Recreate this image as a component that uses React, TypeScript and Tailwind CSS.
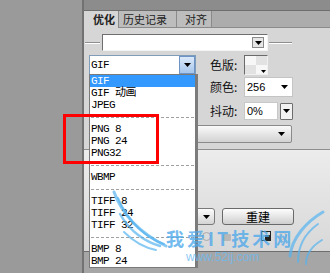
const mono = "font-['Liberation_Mono','Noto_Sans_CJK_SC',monospace]";

function Tri({ className = '' }: { className?: string }) {
  return (
    <svg width="7" height="4" viewBox="0 0 7 4" className={className}>
      <path d="M0 0h7L3.5 4z" fill="#000" />
    </svg>
  );
}

const formats: (string | null)[] = [
  'GIF', 'GIF 动画', 'JPEG', null,
  'PNG 8', 'PNG 24', 'PNG32', null,
  'WBMP', null,
  'TIFF 8', 'TIFF 24', 'TIFF 32', null,
  'BMP 8', 'BMP 24',
];

function FormatList() {
  return (
    <div className="absolute left-[89px] top-[74px] w-[107px] h-[194px] bg-white border border-[#7a7a7a] shadow-[2px_0_0_#7c7c7c]">
      {formats.map((f, i) =>
        f === null ? (
          <div key={i} className="h-[12px] flex items-center px-[1px]">
            <div className="w-full border-t border-dashed border-[#a0a0a0]" />
          </div>
        ) : (
          <div
            key={i}
            className={`h-[12px] leading-[12px] pl-[1px] text-[11px] tracking-[-0.6px] whitespace-pre ${mono} ${
              i === 0 ? 'bg-[#3399ff] text-white' : 'text-black'
            }`}
          >
            {f}
          </div>
        )
      )}
    </div>
  );
}

function Label({ children }: { children: React.ReactNode }) {
  return <div className="ml-[14px] w-[34px] text-[12px] leading-[14px] text-[#111]">{children}</div>;
}

export default function App() {
  return (
    <div className="relative flex w-[330px] h-[273px] overflow-hidden bg-[#9a9a9a] font-['Noto_Sans_CJK_SC',sans-serif]">
      <div className="w-[82px] shrink-0" />
      <div className="w-[2px] shrink-0 bg-[#727272]" />

      <div className="flex-1 flex flex-col min-w-0">
        <div className="h-[11px] bg-[#8c8c8c] border-b border-[#6e6e6e]" />

        <div className="h-[17px] flex bg-[#acacac] text-[11px] leading-[16px] text-[#222]">
          <div className="w-[35px] bg-[#d6d6d6] border-r border-[#8a8a8a] pl-[9px] font-bold">优化</div>
          <div className="w-[58px] bg-[#bdbdbd] border-r border-b border-[#8a8a8a] pl-[4px]">历史记录</div>
          <div className="w-[35px] bg-[#bdbdbd] border-r border-b border-[#8a8a8a] pl-[8px]">对齐</div>
          <div className="flex-1 border-b border-[#8a8a8a]" />
        </div>

        <div className="flex-1 flex flex-col bg-[#d6d6d6]">
          {/* preset row */}
          <div className="mt-[6px] h-[17px] flex items-center">
            <div className="ml-[1px] w-[15px] h-[2px] border-t border-[#8e8e8e] border-b border-b-white" />
            <div className="ml-[2px] w-[166px] h-[17px] flex items-center justify-end pr-[3px] bg-white border border-t-[#6e6e6e] border-l-[#6e6e6e] border-r-[#f4f4f4] border-b-[#f4f4f4]">
              <div className="w-[12px] h-[11px] flex items-center justify-center bg-[#e6e6e6] border border-[#8a8a8a]">
                <Tri />
              </div>
            </div>
            <div className="ml-[1px] w-[23px] h-[2px] border-t border-[#8e8e8e] border-b border-b-white" />
          </div>

          {/* format + palette */}
          <div className="mt-[4px] h-[20px] flex items-center">
            <div className="ml-[5px] w-[107px] h-[20px] flex bg-white border border-[#7f9db9]">
              <div className={`flex-1 pl-[1px] text-[11px] leading-[18px] tracking-[-0.6px] ${mono}`}>GIF</div>
              <div className="w-[16px] h-full flex items-center justify-center bg-gradient-to-b from-[#dbe9f9] to-[#a6c6ec] border border-[#6d93c7]">
                <Tri />
              </div>
            </div>
            <Label>色版:</Label>
            <div className="relative w-[24px] h-[20px] grid grid-cols-2 bg-white border border-t-[#6a6a6a] border-l-[#6a6a6a] border-r-[#f0f0f0] border-b-[#f0f0f0]">
              <div className="bg-[#f7f7f7]" />
              <div className="bg-[#e2e2e2]" />
              <div className="bg-[#e2e2e2]" />
              <div className="bg-[#f7f7f7]" />
              <Tri className="absolute right-[1px] bottom-[1px] w-[5px] h-[3px]" />
            </div>
          </div>

          {/* colours */}
          <div className="mt-[2px] h-[20px] flex items-center">
            <div className="w-[112px]" />
            <Label>颜色:</Label>
            <div className="w-[49px] h-[20px] flex items-center bg-white border border-[#c4c4c4] pl-[2px] font-['Liberation_Sans',sans-serif] text-[11px]">
              256
              <Tri className="ml-auto mr-[4px]" />
            </div>
          </div>

          {/* dither */}
          <div className="mt-[5px] h-[18px] flex items-center">
            <div className="w-[112px]" />
            <Label>抖动:</Label>
            <div className="w-[34px] h-[18px] flex items-center bg-white border border-[#c8c8c8] pl-[2px] font-['Liberation_Sans',sans-serif] text-[11px]">
              0%
            </div>
            <div className="ml-[2px] w-[13px] h-[17px] flex items-center justify-center bg-[#f2f2f2] border border-[#6e6e6e] rounded-[1px]">
              <Tri />
            </div>
          </div>

          {/* long select */}
          <div className="mt-[5px] h-[18px] flex">
            <div className="ml-[5px] w-[203px] h-[18px] flex items-center justify-end pr-[6px] rounded-[2px] border border-[#8a8a8a] bg-gradient-to-b from-[#fafafa] to-[#d2d2d2]">
              <Tri />
            </div>
          </div>

          <div className="mt-[6px] h-px bg-[#8e8e8e]" />

          <div className="flex-1 flex flex-col bg-gradient-to-b from-[#ececec] to-[#d8d8d8]">
            <div className="mt-[58px] h-[17px] flex">
              <div className="ml-[5px] w-[126px] flex items-center justify-end pr-[4px] rounded-[3px] border border-[#7a7a7a] bg-gradient-to-b from-[#fcfcfc] to-[#d4d4d4]">
                <Tri />
              </div>
              <div className="ml-[7px] w-[72px] flex items-center justify-center rounded-[3px] border border-[#6a6a6a] bg-gradient-to-b from-[#fdfdfd] to-[#cfcfcf] text-[12px] text-black">
                重建
              </div>
            </div>
            <div className="mt-[5px] h-[12px] flex items-center">
              <div className="ml-[118px] w-[9px] h-[9px] rounded-full border border-[#a8a8a8]" />
              <div className="ml-[12px] w-[8px] h-[7px] mt-[3px] rounded-[1px] bg-[#b8b8b8]" />
              <div className="ml-[30px] w-[10px] h-[10px] border border-[#222] relative">
                <div className="absolute right-0 bottom-0 w-[5px] h-[5px] bg-[#222]" />
              </div>
              <div className="ml-[8px] w-[8px] h-[8px] rounded-full border border-[#bbb]" />
            </div>
          </div>

          <div className="h-[22px] border-t border-[#6e6e6e] bg-[#a6a6a6]" />
        </div>
      </div>

      <FormatList />

      {/* annotation */}
      <div className="absolute left-[63px] top-[114px] w-[96px] h-[50px] border-[3px] border-[#ff0000]" />

      {/* watermark */}
      <svg className="absolute left-0 top-0 pointer-events-none" width="330" height="273" viewBox="0 0 330 273">
        <g fill="none" stroke="#56b4f0" strokeOpacity="0.7" strokeLinecap="round">
          <path d="M114 192 C122 214 138 232 166 246" strokeWidth="3" />
          <path d="M118 198 C128 222 146 238 164 244" strokeWidth="2" />
          <path d="M120 214 C130 232 146 242 160 246" strokeWidth="2.5" />
          <path d="M124 232 C134 242 146 248 156 250" strokeWidth="2" />
          <path d="M323 212 C306 222 292 238 290 256" strokeWidth="3" />
          <path d="M318 224 C304 234 298 246 298 262" strokeWidth="2" />
          <path d="M322 240 C312 246 306 254 306 264" strokeWidth="2" />
        </g>
      </svg>
      <div className="absolute left-[166px] top-[229px] text-[18px] leading-[18px] font-bold tracking-[3px] text-[#4ea8ea]/80 pointer-events-none">
        我爱IT技术网
      </div>
      <div className="absolute left-[186px] top-[251px] text-[12px] leading-[12px] font-['Liberation_Sans',sans-serif] text-[#6cbaf0]/80 pointer-events-none">
        www.52ij.com
      </div>
    </div>
  );
}
